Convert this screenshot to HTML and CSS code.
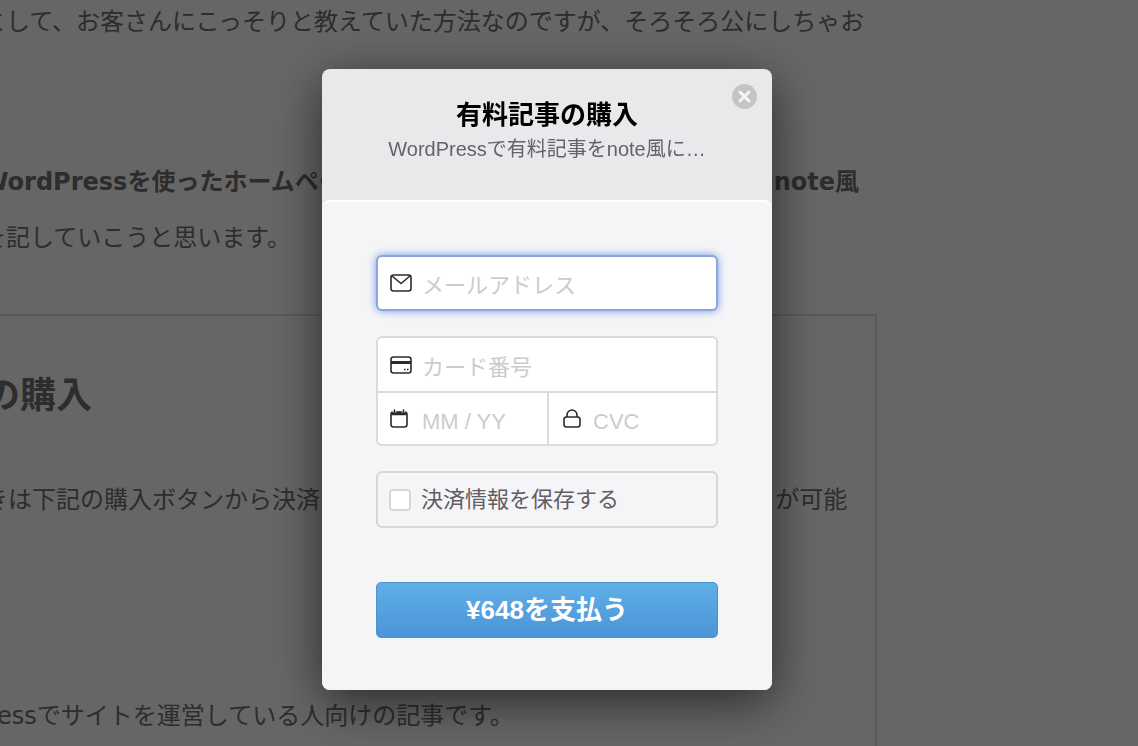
FILE: index.html
```html
<!DOCTYPE html>
<html lang="ja">
<head>
  <meta charset="UTF-8">
  <meta name="viewport" content="width=device-width, initial-scale=1.0">
  <title>有料記事の購入</title>
  <link rel="stylesheet" href="styles.css">
</head>
<body>

  <!-- Article -->
  <main class="article">
    <p>その一つとして、お客さんにこっそりと教えていた方法なのですが、そろそろ公にしちゃお</p>
    <p class="lead"><strong>今回は、WordPressを使ったホームページの記事を有料で販売ができる仕組みをnote風</strong><br>する方法を記していこうと思います。</p>

    <section class="purchase-box">
      <h2>記事の購入</h2>
      <p>この続きは下記の購入ボタンから決済をしていただくと記事を最後まで読むことが可能</p>
      <p class="note">WordPressでサイトを運営している人向けの記事です。</p>
    </section>
  </main>

  <!-- Checkout -->
  <div class="overlay">
    <div class="modal" role="dialog" aria-labelledby="modalTitle">
      <header class="modal-header">
        <h1 id="modalTitle">有料記事の購入</h1>
        <p>WordPressで有料記事をnote風に…</p>
        <button type="button" class="btn-close" aria-label="閉じる">
          <svg width="25" height="25" viewBox="0 0 25 25">
            <circle cx="12.5" cy="12.5" r="12.5" fill="#c3c4c6"/>
            <path d="M8 8l9 9M17 8l-9 9" fill="none" stroke="#f4f5f6" stroke-width="3" stroke-linecap="round"/>
          </svg>
        </button>
      </header>

      <form class="modal-body">
        <label class="field field-email is-focused">
          <svg width="22" height="18" viewBox="0 0 22 18" fill="none" stroke="#2b2b2d" stroke-width="1.6" stroke-linejoin="round">
            <rect x="1" y="1" width="20" height="16" rx="2.5"/>
            <path d="M2 2l9 7.5L20 2"/>
          </svg>
          <input type="email" name="email" placeholder="メールアドレス" aria-label="メールアドレス">
        </label>

        <div class="card-group">
          <label class="field field-number">
            <svg width="22" height="18" viewBox="0 0 22 18" fill="none" stroke="#2b2b2d" stroke-width="1.6">
              <rect x="1" y="1" width="20" height="16" rx="2.5"/>
              <path d="M1 6.5h20" stroke-width="3"/>
              <path d="M14 13.5h1.5M17 13.5h1.5"/>
            </svg>
            <input type="text" name="number" placeholder="カード番号" aria-label="カード番号">
          </label>
          <label class="field field-expiry">
            <svg width="22" height="20" viewBox="0 0 22 20" fill="none" stroke="#2b2b2d" stroke-width="1.6">
              <rect x="1" y="3" width="16" height="15" rx="2.5"/>
              <path d="M1.5 4.5h15" stroke-width="3.5"/>
              <path d="M4.5 0v3.5M13.5 0v3.5" stroke="#fff" stroke-width="3.5"/>
              <path d="M4.5 1v3.5M13.5 1v3.5" stroke-linecap="round"/>
            </svg>
            <input type="text" name="expiry" placeholder="MM / YY" aria-label="有効期限">
          </label>
          <label class="field field-cvc">
            <svg width="20" height="20" viewBox="0 0 20 20" fill="none" stroke="#2b2b2d" stroke-width="1.6">
              <rect x="1" y="8" width="16" height="10" rx="2.5"/>
              <path d="M4 8V6a5 5 0 0 1 10 0v2"/>
            </svg>
            <input type="text" name="cvc" placeholder="CVC" aria-label="CVC">
          </label>
        </div>

        <label class="remember">
          <input type="checkbox" name="remember">
          <span>決済情報を保存する</span>
        </label>

        <button type="submit" class="btn-pay">¥648を支払う</button>
      </form>
    </div>
  </div>

</body>
</html>
```

FILE: styles.css
```css
* {
  box-sizing: border-box;
}

body {
  margin: 0;
  height: 100vh;
  overflow: hidden;
  background-color: #fff;
  color: #707070;
  font-family: "DejaVu Sans", "Noto Sans CJK JP", sans-serif;
  font-size: 24px;
  line-height: 56px;
}

/* Article */
.article {
  width: 991px;
  margin: -6px 0 0 -114px;
  white-space: nowrap;
}

.article p {
  margin: 0;
}

.article .lead {
  margin-top: 104px;
}

.purchase-box {
  margin-top: 48px;
  padding: 52px 24px;
  border: 2px solid #e1e1e1;
}

.purchase-box h2 {
  margin: 0 0 48px;
  font-size: 36px;
}

.purchase-box .note {
  margin-top: 160px;
}

/* Overlay */
.overlay {
  position: fixed;
  inset: 0;
  display: flex;
  justify-content: center;
  align-items: flex-start;
  padding: 69px 44px 0 0;
  background-color: rgba(0, 0, 0, 0.6);
  font-family: "Liberation Sans", "Noto Sans CJK JP", sans-serif;
  line-height: 32px;
}

.modal {
  width: 100%;
  max-width: 450px;
  border-radius: 8px;
  background-color: #e8e9eb;
  box-shadow: 0 12px 50px rgba(0, 0, 0, 0.6);
}

.modal-header {
  position: relative;
  padding: 28px 60px 35px;
  text-align: center;
}

.modal-header h1 {
  margin: 0;
  font-size: 26px;
  line-height: 36px;
  color: #000;
}

.modal-header p {
  margin: 0;
  font-size: 20px;
  color: #636368;
}

.btn-close {
  position: absolute;
  top: 15px;
  right: 15px;
  padding: 0;
  border: none;
  background: none;
  line-height: 0;
  cursor: pointer;
}

.modal-body {
  padding: 53px 54px 52px;
  border-top: 2px solid #fff;
  border-radius: 8px;
  background-color: #f5f5f7;
}

/* Fields */
.field {
  display: flex;
  align-items: center;
  gap: 10px;
  height: 54px;
  padding: 0 12px;
}

.field svg {
  flex: none;
}

.field input {
  flex: 1;
  min-width: 0;
  height: 40px;
  padding: 6px 0 0;
  border: none;
  outline: none;
  background: none;
  font-family: inherit;
  font-size: 22px;
  color: #333;
}

.field input::placeholder {
  color: #cbcbcf;
}

.field-email {
  height: 56px;
  border: 2px solid #8aa5d6;
  border-radius: 6px;
  background-color: #fff;
}

.is-focused {
  box-shadow: 0 0 8px #6f9be6;
}

.card-group {
  display: grid;
  grid-template-columns: repeat(2, minmax(0, 1fr));
  margin-top: 25px;
  border: 2px solid #dadbdd;
  border-radius: 6px;
  background-color: #fff;
}

.field-number {
  grid-column: 1 / -1;
  height: 55px;
  border-bottom: 2px solid #dadbdd;
}

.field-expiry,
.field-cvc {
  height: 51px;
}

.field-cvc {
  padding: 0 14px;
  border-left: 2px solid #dadbdd;
}

.remember {
  display: flex;
  align-items: center;
  gap: 10px;
  height: 57px;
  margin-top: 25px;
  padding: 0 11px;
  border: 2px solid #d6d7d9;
  border-radius: 6px;
  font-size: 22px;
  color: #5f5e66;
}

.remember input {
  appearance: none;
  width: 22px;
  height: 22px;
  margin: 0;
  border: 2px solid #d6d7d9;
  border-radius: 4px;
  background-color: #fff;
}

.btn-pay {
  display: block;
  width: 100%;
  height: 56px;
  margin-top: 54px;
  padding: 0 0 6px;
  border: 1px solid #4b93cf;
  border-radius: 5px;
  background: linear-gradient(#60afe6, #4a94d8);
  font-family: inherit;
  font-size: 26px;
  font-weight: bold;
  color: #fff;
  cursor: pointer;
}
```
